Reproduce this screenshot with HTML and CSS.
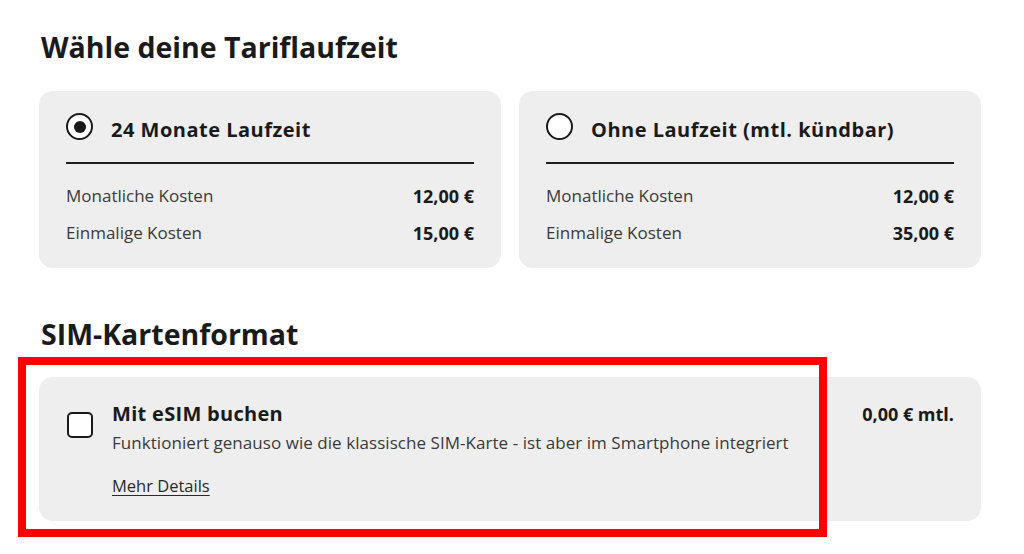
FILE: index.html
```html
<!DOCTYPE html>
<html lang="de">
<head>
<meta charset="utf-8">
<title>Tariflaufzeit</title>
<link rel="stylesheet" href="styles.css">
</head>
<body>
<main class="page">
  <section class="section">
    <h2 class="section-title">Wähle deine Tariflaufzeit</h2>
    <div class="tariffs">
      <div class="tariff-card">
        <div class="tariff-head">
          <span class="radio radio-checked"></span>
          <span class="tariff-name">24 Monate Laufzeit</span>
        </div>
        <div class="cost-list">
          <div class="cost-row"><span class="cost-label">Monatliche Kosten</span><span class="cost-value">12,00 €</span></div>
          <div class="cost-row"><span class="cost-label">Einmalige Kosten</span><span class="cost-value">15,00 €</span></div>
        </div>
      </div>
      <div class="tariff-card">
        <div class="tariff-head">
          <span class="radio"></span>
          <span class="tariff-name">Ohne Laufzeit (mtl. kündbar)</span>
        </div>
        <div class="cost-list">
          <div class="cost-row"><span class="cost-label">Monatliche Kosten</span><span class="cost-value">12,00 €</span></div>
          <div class="cost-row"><span class="cost-label">Einmalige Kosten</span><span class="cost-value">35,00 €</span></div>
        </div>
      </div>
    </div>
  </section>
  <section class="section section-sim">
    <h2 class="section-title">SIM-Kartenformat</h2>
    <div class="option-card">
      <span class="checkbox"></span>
      <div class="option-body">
        <div class="option-title">Mit eSIM buchen</div>
        <div class="option-desc">Funktioniert genauso wie die klassische SIM-Karte - ist aber im Smartphone integriert</div>
        <a class="option-link" href="#">Mehr Details</a>
      </div>
      <div class="option-price">0,00 € mtl.</div>
    </div>
  </section>
  <div class="highlight"></div>
</main>
</body>
</html>
```
FILE: styles.css
```css
* { box-sizing: border-box; }
html, body { margin: 0; padding: 0; background: #fff; }
body {
  font-family: "Open Sans", "Liberation Sans", sans-serif;
  color: #1f1f1f;
  width: 1024px;
  height: 554px;
  overflow: hidden;
}
.page {
  position: relative;
  padding: 27px 43px 0 39px;
}
.section-title {
  margin: 0 0 0 2px;
  font-size: 28.5px;
  line-height: 40px;
  font-weight: 700;
  color: #1a1a1a;
}
.tariffs {
  margin-top: 24px;
  display: grid;
  grid-template-columns: 1fr 1fr;
  gap: 18px;
}
.tariff-card {
  background: #eeeeee;
  border-radius: 14px;
  padding: 22px 27px 22px;
  height: 177px;
}
.tariff-head {
  display: flex;
  align-items: center;
  gap: 18px;
  height: 27px;
}
.radio {
  width: 27px;
  height: 27px;
  border: 2px solid #1a1a1a;
  border-radius: 50%;
  background: #fff;
  display: flex;
  align-items: center;
  justify-content: center;
  flex: none;
}
.radio-checked::after {
  content: "";
  width: 12px;
  height: 12px;
  border-radius: 50%;
  background: #1a1a1a;
}
.tariff-name {
  font-size: 20px;
  letter-spacing: 0.5px;
  font-weight: 700;
  color: #1a1a1a;
  padding-top: 5px;
}
.cost-list {
  margin-top: 22px;
  border-top: 2px solid #1f1f1f;
  padding-top: 20px;
  display: flex;
  flex-direction: column;
  gap: 13px;
}
.cost-row {
  display: flex;
  justify-content: space-between;
  align-items: center;
  line-height: 24px;
}
.cost-label {
  font-size: 17px;
  color: #3a3a3a;
}
.cost-value {
  font-size: 18px;
  font-weight: 700;
  color: #1a1a1a;
}
.section-sim {
  margin-top: 46px;
}
.option-card {
  margin-top: 23px;
  background: #eeeeee;
  border-radius: 14px;
  padding: 26px 27px 20px 28px;
  display: flex;
  align-items: flex-start;
  height: 144px;
}
.checkbox {
  width: 26px;
  height: 26px;
  border: 2px solid #1a1a1a;
  border-radius: 5px;
  background: #fff;
  margin-top: 9px;
  flex: none;
}
.option-body {
  margin-left: 19px;
  flex: 1;
  display: flex;
  flex-direction: column;
  align-items: flex-start;
}
.option-title {
  font-size: 20px;
  letter-spacing: 0.3px;
  font-weight: 700;
  line-height: 22px;
  color: #1a1a1a;
}
.option-desc {
  font-size: 17px;
  letter-spacing: 0.05px;
  line-height: 24px;
  color: #3a3a3a;
  margin-top: 6px;
}
.option-link {
  margin-top: 21px;
  font-size: 16.5px;
  line-height: 20px;
  color: #2a2a2a;
  text-decoration: underline;
  text-underline-offset: 3px;
}
.option-price {
  font-size: 18px;
  font-weight: 700;
  line-height: 22px;
  color: #1a1a1a;
  flex: none;
}
.highlight {
  position: absolute;
  left: 18px;
  top: 357px;
  width: 809px;
  height: 180px;
  border: 8px solid #ff0000;
  pointer-events: none;
}
```
